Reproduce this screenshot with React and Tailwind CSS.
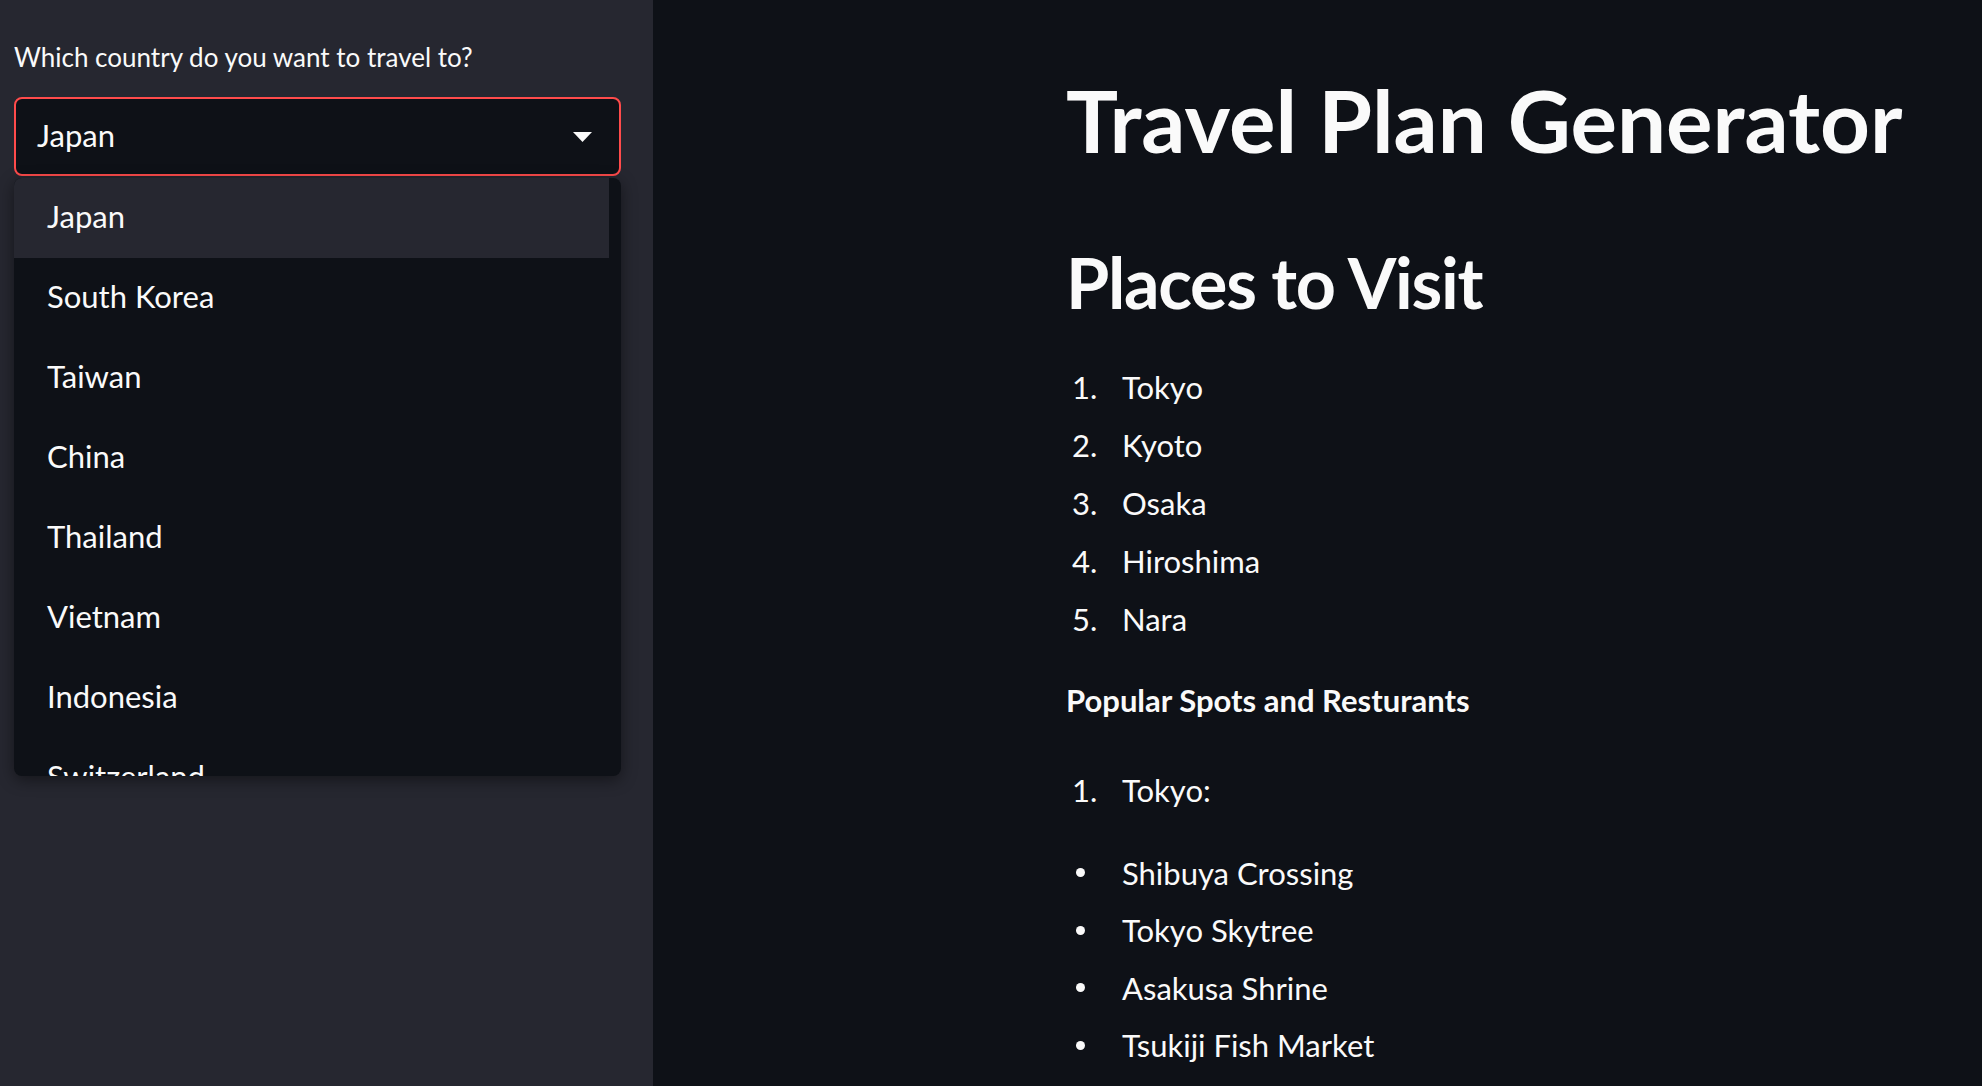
import React from "react";

const countries = ["Japan", "South Korea", "Taiwan", "China", "Thailand", "Vietnam", "Indonesia", "Switzerland"];
const places = ["Tokyo", "Kyoto", "Osaka", "Hiroshima", "Nara"];
const spots = ["Shibuya Crossing", "Tokyo Skytree", "Asakusa Shrine", "Tsukiji Fish Market"];

const App = () => {
  return (
    <div
      className="flex w-full h-[1086px] overflow-hidden text-[#fafafa]"
      style={{ fontFamily: "Lato, 'Noto Sans', sans-serif" }}
    >
      {/* Sidebar */}
      <div className="relative w-[653px] shrink-0 bg-[#262730] px-[14px] pt-[39px]">
        <div className="text-[26px] leading-[36px] h-[36px]">Which country do you want to travel to?</div>

        <div className="relative mt-[22px] w-[607px]">
          <div className="h-[79px] w-full rounded-lg border-2 border-[#ff4b4b] bg-[#0e1117] flex items-center justify-between pl-[21px] pr-[27px]">
            <span className="text-[31px] pb-[3px]">Japan</span>
            <svg width="19" height="10" viewBox="0 0 19 10">
              <path d="M0 0 L19 0 L9.5 10 Z" fill="#fafafa" />
            </svg>
          </div>

          {/* Dropdown menu */}
          <div className="absolute left-0 top-[81px] w-[607px] h-[598px] rounded-lg bg-[#0e1117] overflow-hidden shadow-[0_4px_16px_rgba(0,0,0,0.45)] z-10">
            {countries.map((c, i) => (
              <div
                key={c}
                className={
                  i === 0
                    ? "h-[80px] mr-[12px] flex items-center pl-[33px] pb-[4px] text-[31px] bg-[#262730]"
                    : "h-[80px] mr-[12px] flex items-center pl-[33px] pb-[4px] text-[31px]"
                }
              >
                {c}
              </div>
            ))}
          </div>
        </div>
      </div>

      {/* Main content */}
      <div className="flex-1 bg-[#0e1117] pl-[413px] pt-[68px]">
        <h1 className="text-[87px] font-bold leading-[104px] h-[104px]">Travel Plan Generator</h1>

        <h2 className="mt-[68px] text-[70px] font-bold leading-[84px] h-[84px] tracking-[-1.3px]">Places to Visit</h2>

        <ol className="mt-[34px]">
          {places.map((p, i) => (
            <li key={p} className="flex h-[58px] items-center text-[31px]">
              <span className="w-[56px] pl-[6px]">{i + 1}.</span>
              <span>{p}</span>
            </li>
          ))}
        </ol>

        <div className="mt-[23px] h-[58px] flex items-center text-[31px] font-bold">Popular Spots and Resturants</div>

        <ol className="mt-[32px]">
          <li className="flex h-[58px] items-center text-[31px]">
            <span className="w-[56px] pl-[6px]">1.</span>
            <span>Tokyo:</span>
          </li>
        </ol>

        <ul className="mt-[25px]">
          {spots.map((s) => (
            <li key={s} className="flex h-[57.5px] items-center text-[31px]">
              <span className="w-[56px] pl-[10px] flex items-center">
                <span className="block w-[9px] h-[9px] rounded-full bg-[#fafafa]" />
              </span>
              <span>{s}</span>
            </li>
          ))}
        </ul>
      </div>
    </div>
  );
};

export default App;
